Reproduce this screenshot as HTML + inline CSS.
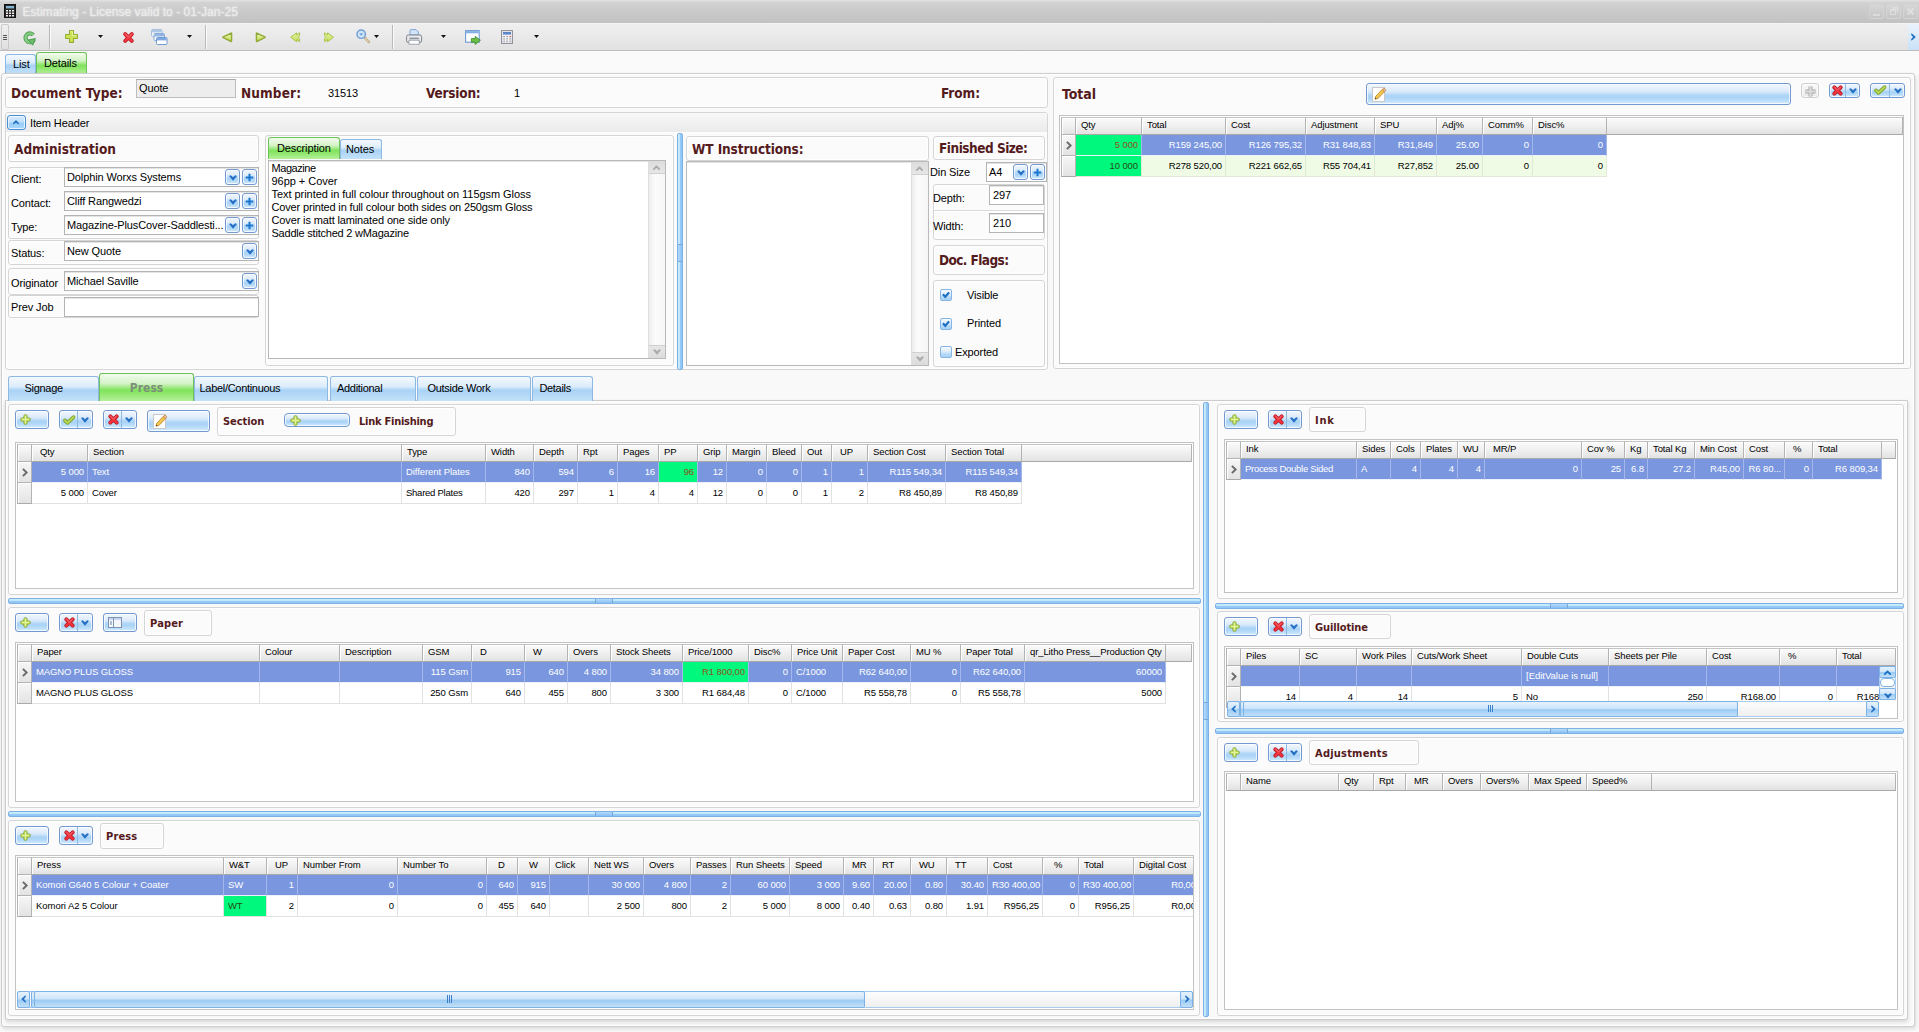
<!DOCTYPE html>
<html><head><meta charset="utf-8"><title>Estimating</title>
<style>
html,body{margin:0;padding:0}
body{width:1919px;height:1032px;overflow:hidden;position:relative;background:#fafafa;
 font:11px "Liberation Sans",sans-serif;color:#000;letter-spacing:-0.12px}
div,span{box-sizing:border-box}
.a{position:absolute;white-space:nowrap}
.pnl{position:absolute;border:1px solid #d5d5d5;border-radius:3px;background:#fbfbfb;box-shadow:inset 0 0 0 1px #fff}
.btn{position:absolute;border:1px solid #7499d0;border-radius:3px;
 background:linear-gradient(#f1f7fd 0%,#e2eefb 28%,#d0e5fa 44%,#b2d7f7 54%,#a9d3f6 66%,#bfe0fa 86%,#d6effd 100%);box-shadow:inset 0 0 0 1px rgba(255,255,255,.7)}
.btn .sep{position:absolute;top:0;bottom:0;width:1px;background:#8dbbe6}
.inp{position:absolute;border:1px solid #b4b4b4;background:#fff;box-shadow:inset 0 1px 0 #e4e4e4}
.t{position:absolute;white-space:nowrap;line-height:13px}
.grid{position:absolute;border:1px solid #c2c2c2;background:#fff;overflow:hidden}
.hc{font-size:9.5px;letter-spacing:-0.1px;position:absolute;border:1px solid #b3b3b3;border-top-color:#c4c4c4;border-bottom-color:#a9a9a9;background:linear-gradient(#fbfbfb 0%,#f0f0f0 50%,#e2e2e2 100%);
 box-shadow:inset 1px 1px 0 #fff;white-space:nowrap;overflow:hidden;line-height:12px;padding:1px 0 0 4px}
.c{font-size:9.5px;letter-spacing:-0.1px;position:absolute;white-space:nowrap;overflow:hidden;line-height:13px;border-right:1px solid #e2e2e2;border-bottom:1px solid #e2e2e2;padding:4px 3px 0 4px;background:#fff}
.c.r{text-align:right}
.c.s{background:#7996df;color:#fff;border-right-color:#a3b7ea;border-bottom-color:#eef2fb}
.c.g{background:#00f97d;color:#274a10}
.c.s.g{background:#00f97d;color:#93501e}
.c.lg{background:#effbe4;border-right-color:#dfe9d6;border-bottom-color:#dfe9d6}
.c.lg.g{background:#00f97d;color:#274a10}
.ind{position:absolute;border:1px solid #b3b3b3;border-bottom-color:#a9a9a9;background:linear-gradient(#f6f6f6,#e3e3e3);box-shadow:inset 1px 1px 0 #fff}
.tab{position:absolute;border:1px solid #8db8e4;border-bottom:none;border-radius:3px 3px 0 0;
 background:linear-gradient(#f4f9fe 0%,#dcecfb 40%,#a9d2f5 55%,#c4e2fa 100%);white-space:nowrap;line-height:13px}
.tab.on{border-color:#6fc25a;background:linear-gradient(#f2fbee 0%,#d5f3c8 35%,#7fe35a 60%,#b4f09a 100%)}
.spl{position:absolute;background:linear-gradient(#cbedfd 0%,#c0e6fc 42%,#95caf7 58%,#8fc6f6 100%);border:1px solid #7fb0e2;border-radius:2px}
.spl i{position:absolute;top:0;bottom:0;left:50%;margin-left:-10px;width:16px;border-left:1px solid #79a6da;border-right:1px solid #79a6da;background:linear-gradient(#b5dcfb,#86bff5)}
.splv{position:absolute;background:linear-gradient(90deg,#cbedfd 0%,#c0e6fc 42%,#95caf7 58%,#8fc6f6 100%);border:1px solid #7fb0e2;border-radius:2px}
.splv i{position:absolute;left:0;right:0;top:50%;margin-top:-8px;height:16px;border-top:1px solid #79a6da;border-bottom:1px solid #79a6da;background:linear-gradient(90deg,#b5dcfb,#86bff5)}
.sb{position:absolute;background:linear-gradient(#fdfdfd,#efefef);border:1px solid #a9cdf0;border-radius:2px}
.sbt{position:absolute;border:1px solid #7fb2e4;border-radius:2px;background:linear-gradient(#e6f2fd 0%,#cfe6fb 45%,#9ccbf3 55%,#c2e0f9 100%)}
svg{position:absolute;overflow:visible}
</style></head>
<body>
<svg style="left:0;top:0" width="0" height="0"><defs><linearGradient id="gy" x1="0" y1="0" x2="0" y2="1"><stop offset="0" stop-color="#f0f9c8"/><stop offset=".45" stop-color="#d8eb84"/><stop offset="1" stop-color="#b9d648"/></linearGradient><linearGradient id="gy2" x1="0" y1="0" x2="0" y2="1"><stop offset="0" stop-color="#e4f2a6"/><stop offset=".5" stop-color="#d4e87c"/><stop offset="1" stop-color="#c6e05e"/></linearGradient></defs></svg>
<div class="a" style="left:0px;top:0px;width:1919px;height:23px;background:linear-gradient(#e2e2e2 0%,#d2d2d2 12%,#cacaca 50%,#c2c2c2 100%)"></div>
<svg style="left:4px;top:4px" width="12" height="14" viewBox="0 0 12 14"><rect x="0.5" y="0.5" width="11" height="13" fill="#2a2a2a" stroke="#111"/><rect x="2" y="2" width="8" height="2.4" fill="#7fb6d8"/><rect x="2" y="6.0" width="2" height="1.5" fill="#f2f2f2"/><rect x="5" y="6.0" width="2" height="1.5" fill="#f2f2f2"/><rect x="8" y="6.0" width="2" height="1.5" fill="#f2f2f2"/><rect x="2" y="8.5" width="2" height="1.5" fill="#f2f2f2"/><rect x="5" y="8.5" width="2" height="1.5" fill="#f2f2f2"/><rect x="8" y="8.5" width="2" height="1.5" fill="#f2f2f2"/><rect x="2" y="11.0" width="2" height="1.5" fill="#f2f2f2"/><rect x="5" y="11.0" width="2" height="1.5" fill="#f2f2f2"/><rect x="8" y="11.0" width="2" height="1.5" fill="#f2f2f2"/></svg>
<div class="t" style="left:22.5px;top:5px;font-size:12px;line-height:15px;color:#ececec;text-shadow:0 0 2px #f4f4f4,0 0 1px #c8c8c8;letter-spacing:0.03px">Estimating - License valid to - 01-Jan-25</div>
<div class="a" style="left:1869px;top:4px;width:15px;height:15px;border:1px solid #d4d4d4;border-radius:2px;background:linear-gradient(#d6d6d6,#c6c6c6)"></div>
<div class="a" style="left:1886px;top:4px;width:15px;height:15px;border:1px solid #d4d4d4;border-radius:2px;background:linear-gradient(#d6d6d6,#c6c6c6)"></div>
<div class="a" style="left:1903px;top:4px;width:15px;height:15px;border:1px solid #d4d4d4;border-radius:2px;background:linear-gradient(#d6d6d6,#c6c6c6)"></div>
<div class="a" style="left:1873px;top:14px;width:7px;height:2px;background:#dcdcdc"></div>
<div class="a" style="left:1890px;top:9px;width:6px;height:6px;border:1px solid #dedede;border-top-width:2px"></div>
<div class="a" style="left:1892px;top:7px;width:6px;height:6px;border:1px solid #dedede;border-top-width:2px;border-left:none;border-bottom:none"></div>
<svg style="left:1906px;top:7px" width="9" height="9" viewBox="0 0 9 9"><path d="M1.5 1.5L7.5 7.5M7.5 1.5L1.5 7.5" stroke="#e0e0e0" stroke-width="1.8"/></svg>
<div class="a" style="left:0px;top:23px;width:1919px;height:28px;background:linear-gradient(#efefef 0%,#e9e9e9 50%,#e1e1e1 100%);border-bottom:1px solid #bdbdbd;border-top:1px solid #f4f4f4"></div>
<div class="a" style="left:1px;top:24px;width:8px;height:26px;border:1px solid #c9c9c9;border-radius:2px;background:linear-gradient(#efefef,#e0e0e0)"></div>
<div class="a" style="left:3px;top:35px;width:4px;height:1px;background:#555"></div>
<div class="a" style="left:3px;top:37px;width:4px;height:1px;background:#555"></div>
<div class="a" style="left:3px;top:39px;width:4px;height:1px;background:#555"></div>
<div class="a" style="left:49px;top:25px;width:2px;height:24px;border-left:1px solid #b9b9b9;border-right:1px solid #fbfbfb"></div>
<div class="a" style="left:205px;top:25px;width:2px;height:24px;border-left:1px solid #b9b9b9;border-right:1px solid #fbfbfb"></div>
<div class="a" style="left:392px;top:25px;width:2px;height:24px;border-left:1px solid #b9b9b9;border-right:1px solid #fbfbfb"></div>
<svg style="left:23px;top:31px" width="13" height="14" viewBox="0 0 13 14"><path d="M10.3 4.0 A4.4 4.4 0 1 0 10.9 8.6" fill="none" stroke="#4f9f52" stroke-width="4.2"/><path d="M10.3 4.0 A4.4 4.4 0 1 0 10.9 8.6" fill="none" stroke="#86cc84" stroke-width="2.4"/><path d="M5.2 9.0 L12.4 7.6 L9.8 14.2 Z" fill="#6cba6a" stroke="#4a994c" stroke-width=".9" stroke-linejoin="round"/></svg>
<svg style="left:65px;top:30px" width="13" height="13" viewBox="0 0 13 13"><path d="M4.5 0.6H8.5V4.5H12.4V8.5H8.5V12.4H4.5V8.5H0.6V4.5H4.5Z" fill="#cde256" stroke="#93b233" stroke-width="1.1" stroke-linejoin="round"/><path d="M5.5 1.6H7.5V5.5H11.4" fill="none" stroke="#e6f29a" stroke-width="1"/></svg>
<svg style="left:98px;top:35px" width="5" height="3" viewBox="0 0 5 3"><path d="M0 0H5L2.5 3Z" fill="#111"/></svg>
<svg style="left:123px;top:32px" width="11" height="11" viewBox="0 0 11 11"><path d="M2.2 2.2L8.8 8.8M8.8 2.2L2.2 8.8" fill="none" stroke="#c01c26" stroke-width="4" stroke-linecap="round"/><path d="M2.2 2.2L8.8 8.8M8.8 2.2L2.2 8.8" fill="none" stroke="#f03640" stroke-width="2.4" stroke-linecap="round"/><path d="M2.5 2.1L5.5 4.9L8.5 2.1" fill="none" stroke="#f98a90" stroke-width=".8" stroke-linecap="round"/></svg>
<svg style="left:151px;top:29px" width="17" height="16" viewBox="0 0 17 16"><g opacity="0.55"><rect x="0.5" y="0.5" width="10.5" height="7" rx="1" fill="#fff" stroke="#6f9bd6"/><rect x="1" y="1" width="9.5" height="2.4" fill="#7fa8e0"/></g><g opacity="0.8"><rect x="3.0" y="4.5" width="10.5" height="7" rx="1" fill="#fff" stroke="#6f9bd6"/><rect x="3.5" y="5" width="9.5" height="2.4" fill="#7fa8e0"/></g><g opacity="1"><rect x="5.5" y="8.5" width="10.5" height="7" rx="1" fill="#fff" stroke="#6f9bd6"/><rect x="6" y="9" width="9.5" height="2.4" fill="#7fa8e0"/></g></svg>
<svg style="left:187px;top:35px" width="5" height="3" viewBox="0 0 5 3"><path d="M0 0H5L2.5 3Z" fill="#111"/></svg>
<svg style="left:222px;top:32px" width="10" height="10.4" viewBox="0 0 10 10.4"><path d="M9.2 1.2 Q9.6 0.6 9.6 1.6 L9.6 8.8 Q9.6 9.8 8.8 9.4 L1.2 5.6 Q0.4 5.2 1.2 4.8 Z" fill="url(#gy)" stroke="#90aa38" stroke-width="1.4" stroke-linejoin="round"/></svg>
<svg style="left:256px;top:32px" width="10" height="10.4" viewBox="0 0 10 10.4"><path d="M0.8 1.2 Q0.4 0.6 0.4 1.6 L0.4 8.8 Q0.4 9.8 1.2 9.4 L8.8 5.6 Q9.6 5.2 8.8 4.8 Z" fill="url(#gy)" stroke="#90aa38" stroke-width="1.4" stroke-linejoin="round"/></svg>
<svg style="left:290px;top:32px" width="10" height="10.4" viewBox="0 0 10 10.4"><path d="M9.6 0.8 L6.6 3.0 L6.6 0.8 L0.7 5.2 L6.6 9.8 L6.6 7.4 L9.6 9.8 L9.6 6.6 L8.2 5.2 L9.6 3.8 Z" fill="url(#gy2)" stroke="#a9c44e" stroke-width="1" stroke-linejoin="round"/></svg>
<svg style="left:324px;top:32px" width="10" height="10.4" viewBox="0 0 10 10.4"><path d="M0.6 0.8 L3.6 3.0 L3.6 0.8 L9.5 5.2 L3.6 9.8 L3.6 7.4 L0.6 9.8 L0.6 6.6 L2.0 5.2 L0.6 3.8 Z" fill="url(#gy2)" stroke="#a9c44e" stroke-width="1" stroke-linejoin="round"/></svg>
<svg style="left:356px;top:29px" width="14" height="14" viewBox="0 0 14 14"><path d="M8.2 8.2 L12.8 12.8" stroke="#b9a27c" stroke-width="2.6" stroke-linecap="round"/><path d="M8.4 8.4 L12.6 12.6" stroke="#ecdcbc" stroke-width="1.1" stroke-linecap="round"/><circle cx="5.2" cy="5.2" r="4.2" fill="#cfe3f7" stroke="#6f9dd4" stroke-width="1.4"/><path d="M3.4 4.6 L5.2 6.4 L7 4.6 Z" fill="#4d8fd6"/></svg>
<svg style="left:374px;top:35px" width="5" height="3" viewBox="0 0 5 3"><path d="M0 0H5L2.5 3Z" fill="#111"/></svg>
<svg style="left:406px;top:29px" width="16" height="16" viewBox="0 0 16 16"><path d="M4 6V1.5Q4 .6 5 .6H10L12.4 3V6Z" fill="#d4e4f8" stroke="#7ea4d8" stroke-width="1"/><rect x="0.6" y="6" width="15" height="7.4" rx="1.6" fill="#e9e9ee" stroke="#7f848f" stroke-width="1"/><rect x="3.4" y="8.6" width="9.4" height="1.6" fill="#8f949e"/><rect x="3" y="11.2" width="10.2" height="4" fill="#fff" stroke="#8d93a0" stroke-width=".8"/></svg>
<svg style="left:441px;top:35px" width="5" height="3" viewBox="0 0 5 3"><path d="M0 0H5L2.5 3Z" fill="#111"/></svg>
<svg style="left:465px;top:30px" width="16" height="15" viewBox="0 0 16 15"><rect x="0.6" y="0.6" width="13.6" height="11.6" fill="#fff" stroke="#6f9bd6" stroke-width="1.1"/><rect x="1.1" y="1.1" width="12.6" height="2.2" fill="#86aee4"/><path d="M6.4 8.6H10.2V6.4L15.4 10.3L10.2 14.4V12.2H6.4Z" fill="#6cc04a" stroke="#3f8f2c" stroke-width=".9" stroke-linejoin="round"/></svg>
<svg style="left:501px;top:30px" width="12" height="14" viewBox="0 0 12 14"><rect x="0.6" y="0.6" width="10.8" height="12.8" fill="#f4f4f6" stroke="#8c8f99" stroke-width="1.1"/><rect x="2" y="2" width="8" height="2.6" fill="#5b86c8"/><rect x="2.2" y="6.0" width="1.8" height="1.1" fill="#9a9ca8"/><rect x="5.2" y="6.0" width="1.8" height="1.1" fill="#9a9ca8"/><rect x="8.2" y="6.0" width="1.8" height="1.1" fill="#d06a6a"/><rect x="2.2" y="8.3" width="1.8" height="1.1" fill="#9a9ca8"/><rect x="5.2" y="8.3" width="1.8" height="1.1" fill="#9a9ca8"/><rect x="8.2" y="8.3" width="1.8" height="1.1" fill="#9a9ca8"/><rect x="2.2" y="10.6" width="1.8" height="1.1" fill="#9a9ca8"/><rect x="5.2" y="10.6" width="1.8" height="1.1" fill="#9a9ca8"/><rect x="8.2" y="10.6" width="1.8" height="1.1" fill="#9a9ca8"/></svg>
<svg style="left:534px;top:35px" width="5" height="3" viewBox="0 0 5 3"><path d="M0 0H5L2.5 3Z" fill="#111"/></svg>
<div class="a" style="left:1908px;top:24px;width:11px;height:26px;background:linear-gradient(#eaf3fc,#c9e1f8)"></div>
<svg style="left:1911px;top:33px" width="5" height="8" viewBox="0 0 5 8"><path d="M0.6 0.2 L0.1 1.8 L2.1 4 L0.1 6.2 L0.6 7.8 L4.8 4 Z" fill="#1b6fc4"/></svg>
<div class="tab" style="left:5px;top:54px;width:31px;height:20px;"><span style="position:absolute;left:7px;top:3px">List</span></div>
<div class="tab on" style="left:36px;top:52px;width:51px;height:22px;"><span style="position:absolute;left:7px;top:4px">Details</span></div>
<div class="a" style="left:1px;top:73px;width:1914px;height:954px;border:1px solid #cdcdcd;border-radius:3px;background:#f9f9f9;box-shadow:inset 0 0 0 1px #fff,1px 2px 4px rgba(0,0,0,.13)"></div>
<div class="pnl" style="left:5px;top:77px;width:1043px;height:31px;"></div>
<div class="a" style="left:11px;top:85px;font:bold 13.5px/16.5px 'DejaVu Sans Condensed','Liberation Sans',sans-serif;color:#541a1c;letter-spacing:0.112px;">Document Type:</div>
<div class="a" style="left:136px;top:79px;width:100px;height:19px;border:1px solid #bdbdbd;border-top-color:#a8a8a8;background:#ededed"></div>
<div class="t" style="left:139px;top:82px;">Quote</div>
<div class="a" style="left:241px;top:85px;font:bold 13.5px/16.5px 'DejaVu Sans Condensed','Liberation Sans',sans-serif;color:#541a1c;letter-spacing:0.122px;">Number:</div>
<div class="t" style="left:328px;top:87px;">31513</div>
<div class="a" style="left:426px;top:85px;font:bold 13.5px/16.5px 'DejaVu Sans Condensed','Liberation Sans',sans-serif;color:#541a1c;letter-spacing:-0.206px;">Version:</div>
<div class="t" style="left:514px;top:87px;">1</div>
<div class="a" style="left:941px;top:85px;font:bold 13.5px/16.5px 'DejaVu Sans Condensed','Liberation Sans',sans-serif;color:#541a1c;letter-spacing:-0.074px;">From:</div>
<div class="pnl" style="left:5px;top:112px;width:1043px;height:258px;"></div>
<div class="a" style="left:6px;top:113px;width:1041px;height:20px;background:linear-gradient(#f8f8f8,#f1f1f1 50%,#eaeaea);border-bottom:1px solid #fdfdfd;border-radius:2px 2px 0 0"></div>
<div class="btn" style="left:7px;top:115px;width:19px;height:15px;border-color:#4a8fd6;background:linear-gradient(#d6eafb 0%,#c4e1fa 40%,#9acdf7 60%,#a8d8fb 100%)"><svg style="left:5px;top:3.7px" width="6" height="4" viewBox="0 0 6 4"><path d="M0.7 3.4 L3 1 L5.3 3.4" fill="none" stroke="#1f6fc0" stroke-width="1.5" stroke-linecap="round" stroke-linejoin="round"/></svg>
</div>
<div class="t" style="left:30px;top:117px;">Item Header</div>
<div class="pnl" style="left:8px;top:135px;width:251px;height:27px;"></div>
<div class="a" style="left:14px;top:141px;font:bold 13.5px/16.5px 'DejaVu Sans Condensed','Liberation Sans',sans-serif;color:#541a1c;letter-spacing:0.007px;">Administration</div>
<div class="pnl" style="left:8px;top:167px;width:251px;height:72px;"></div>
<div class="pnl" style="left:8px;top:240px;width:251px;height:25px;"></div>
<div class="pnl" style="left:8px;top:268px;width:251px;height:27px;"></div>
<div class="pnl" style="left:8px;top:295px;width:251px;height:23px;"></div>
<div class="t" style="left:11px;top:173px;">Client:</div>
<div class="inp" style="left:64px;top:167px;width:195px;height:20px;"></div>
<div class="t" style="left:67px;top:171px;">Dolphin Worxs Systems</div>
<div class="btn" style="left:242px;top:169px;width:15px;height:16px;"><svg style="left:2px;top:3px" width="9" height="9" viewBox="0 0 9 9"><path d="M4.5 0.8V8.2M0.8 4.5H8.2" fill="none" stroke="#1b76cf" stroke-width="2"/></svg>
</div>
<div class="btn" style="left:225px;top:169px;width:15px;height:16px;"><svg style="left:2.5px;top:4.5px" width="8" height="6" viewBox="0 0 7 5"><path d="M0 0.8 L1.6 0 L3.5 1.9 L5.4 0 L7 0.8 L3.5 5 Z" fill="#2570c4"/></svg>
</div>
<div class="t" style="left:11px;top:197px;">Contact:</div>
<div class="inp" style="left:64px;top:191px;width:195px;height:20px;"></div>
<div class="t" style="left:67px;top:195px;">Cliff Rangwedzi</div>
<div class="btn" style="left:242px;top:193px;width:15px;height:16px;"><svg style="left:2px;top:3px" width="9" height="9" viewBox="0 0 9 9"><path d="M4.5 0.8V8.2M0.8 4.5H8.2" fill="none" stroke="#1b76cf" stroke-width="2"/></svg>
</div>
<div class="btn" style="left:225px;top:193px;width:15px;height:16px;"><svg style="left:2.5px;top:4.5px" width="8" height="6" viewBox="0 0 7 5"><path d="M0 0.8 L1.6 0 L3.5 1.9 L5.4 0 L7 0.8 L3.5 5 Z" fill="#2570c4"/></svg>
</div>
<div class="t" style="left:11px;top:221px;">Type:</div>
<div class="inp" style="left:64px;top:215px;width:195px;height:20px;"></div>
<div class="t" style="left:67px;top:219px;">Magazine-PlusCover-Saddlesti...</div>
<div class="btn" style="left:242px;top:217px;width:15px;height:16px;"><svg style="left:2px;top:3px" width="9" height="9" viewBox="0 0 9 9"><path d="M4.5 0.8V8.2M0.8 4.5H8.2" fill="none" stroke="#1b76cf" stroke-width="2"/></svg>
</div>
<div class="btn" style="left:225px;top:217px;width:15px;height:16px;"><svg style="left:2.5px;top:4.5px" width="8" height="6" viewBox="0 0 7 5"><path d="M0 0.8 L1.6 0 L3.5 1.9 L5.4 0 L7 0.8 L3.5 5 Z" fill="#2570c4"/></svg>
</div>
<div class="t" style="left:11px;top:247px;">Status:</div>
<div class="inp" style="left:64px;top:241px;width:195px;height:20px;"></div>
<div class="t" style="left:67px;top:245px;">New Quote</div>
<div class="btn" style="left:242px;top:243px;width:15px;height:16px;"><svg style="left:2.5px;top:4.5px" width="8" height="6" viewBox="0 0 7 5"><path d="M0 0.8 L1.6 0 L3.5 1.9 L5.4 0 L7 0.8 L3.5 5 Z" fill="#2570c4"/></svg>
</div>
<div class="t" style="left:11px;top:277px;">Originator</div>
<div class="inp" style="left:64px;top:271px;width:195px;height:20px;"></div>
<div class="t" style="left:67px;top:275px;">Michael Saville</div>
<div class="btn" style="left:242px;top:273px;width:15px;height:16px;"><svg style="left:2.5px;top:4.5px" width="8" height="6" viewBox="0 0 7 5"><path d="M0 0.8 L1.6 0 L3.5 1.9 L5.4 0 L7 0.8 L3.5 5 Z" fill="#2570c4"/></svg>
</div>
<div class="t" style="left:11px;top:301px;">Prev Job</div>
<div class="inp" style="left:64px;top:297px;width:195px;height:20px;"></div>
<div class="pnl" style="left:265px;top:135px;width:409px;height:231px;"></div>
<div class="tab on" style="left:268px;top:137px;width:72px;height:22px;"><span style="position:absolute;left:8px;top:4px">Description</span></div>
<div class="tab" style="left:340px;top:139px;width:42px;height:20px;"><span style="position:absolute;left:5px;top:3px">Notes</span></div>
<div class="inp" style="left:268px;top:160px;width:398px;height:199px;border-color:#b9b9b9"></div>
<div class="t" style="left:271.5px;top:162px;letter-spacing:-0.443px">Magazine</div>
<div class="t" style="left:271.5px;top:175px;letter-spacing:-0.033px">96pp + Cover</div>
<div class="t" style="left:271.5px;top:188px;letter-spacing:-0.049px">Text printed in full colour throughout on 115gsm Gloss</div>
<div class="t" style="left:271.5px;top:201px;letter-spacing:-0.16px">Cover printed in full colour both sides on 250gsm Gloss</div>
<div class="t" style="left:271.5px;top:214px;letter-spacing:-0.134px">Cover is matt laminated one side only</div>
<div class="t" style="left:271.5px;top:227px;letter-spacing:-0.215px">Saddle stitched 2 wMagazine</div>
<div class="a" style="left:648px;top:161px;width:17px;height:197px;background:linear-gradient(90deg,#ededed,#fbfbfb 35%,#f6f6f6);border-left:1px solid #dedede"></div>
<div class="a" style="left:649px;top:161px;width:16px;height:13px;background:linear-gradient(#dcdcdc,#e6e6e6);border-bottom:1px solid #d0d0d0"></div>
<div class="a" style="left:649px;top:345px;width:16px;height:13px;background:linear-gradient(#e6e6e6,#dcdcdc);border-top:1px solid #d0d0d0"></div>
<svg style="left:653px;top:165px" width="7" height="5" viewBox="0 0 7 5"><path d="M0.8 4.1 L3.5 1.4 L6.2 4.1" fill="none" stroke="#aaaaaa" stroke-width="1.8" stroke-linecap="round" stroke-linejoin="round"/></svg>
<svg style="left:652.5px;top:348.5px" width="8" height="6" viewBox="0 0 7 5"><path d="M0 0.8 L1.6 0 L3.5 1.9 L5.4 0 L7 0.8 L3.5 5 Z" fill="#aaaaaa"/></svg>
<div class="splv" style="left:677px;top:133px;width:6px;height:237px;"><i></i></div>
<div class="pnl" style="left:686px;top:136px;width:243px;height:25px;"></div>
<div class="a" style="left:692px;top:141px;font:bold 13.5px/16.5px 'DejaVu Sans Condensed','Liberation Sans',sans-serif;color:#541a1c;letter-spacing:-0.094px;">WT Instructions:</div>
<div class="inp" style="left:686px;top:161px;width:243px;height:205px;border-color:#b9b9b9"></div>
<div class="a" style="left:911px;top:162px;width:17px;height:203px;background:linear-gradient(90deg,#ededed,#fbfbfb 35%,#f6f6f6);border-left:1px solid #dedede"></div>
<div class="a" style="left:912px;top:162px;width:16px;height:13px;background:linear-gradient(#dcdcdc,#e6e6e6);border-bottom:1px solid #d0d0d0"></div>
<div class="a" style="left:912px;top:352px;width:16px;height:13px;background:linear-gradient(#e6e6e6,#dcdcdc);border-top:1px solid #d0d0d0"></div>
<svg style="left:916px;top:166px" width="7" height="5" viewBox="0 0 7 5"><path d="M0.8 4.1 L3.5 1.4 L6.2 4.1" fill="none" stroke="#aaaaaa" stroke-width="1.8" stroke-linecap="round" stroke-linejoin="round"/></svg>
<svg style="left:915.5px;top:355.5px" width="8" height="6" viewBox="0 0 7 5"><path d="M0 0.8 L1.6 0 L3.5 1.9 L5.4 0 L7 0.8 L3.5 5 Z" fill="#aaaaaa"/></svg>
<div class="pnl" style="left:933px;top:136px;width:112px;height:24px;"></div>
<div class="a" style="left:939px;top:140px;font:bold 13.5px/16.5px 'DejaVu Sans Condensed','Liberation Sans',sans-serif;color:#541a1c;letter-spacing:-0.492px;">Finished Size:</div>
<div class="t" style="left:930px;top:166px;">Din Size</div>
<div class="inp" style="left:986px;top:162px;width:61px;height:20px;"></div>
<div class="t" style="left:989px;top:166px;">A4</div>
<div class="btn" style="left:1030px;top:164px;width:15px;height:16px;"><svg style="left:2px;top:3px" width="9" height="9" viewBox="0 0 9 9"><path d="M4.5 0.8V8.2M0.8 4.5H8.2" fill="none" stroke="#1b76cf" stroke-width="2"/></svg>
</div>
<div class="btn" style="left:1013px;top:164px;width:15px;height:16px;"><svg style="left:2.5px;top:4.5px" width="8" height="6" viewBox="0 0 7 5"><path d="M0 0.8 L1.6 0 L3.5 1.9 L5.4 0 L7 0.8 L3.5 5 Z" fill="#2570c4"/></svg>
</div>
<div class="pnl" style="left:933px;top:184px;width:112px;height:56px;"></div>
<div class="t" style="left:933px;top:192px;">Depth:</div>
<div class="inp" style="left:989px;top:185px;width:55px;height:20px;"></div>
<div class="t" style="left:993px;top:189px;">297</div>
<div class="t" style="left:933px;top:220px;">Width:</div>
<div class="inp" style="left:989px;top:213px;width:55px;height:20px;"></div>
<div class="t" style="left:993px;top:217px;">210</div>
<div class="a" style="left:934px;top:210px;width:110px;height:2px;border-top:1px solid #dadada;background:#fff"></div>
<div class="pnl" style="left:933px;top:245px;width:112px;height:30px;"></div>
<div class="a" style="left:939px;top:252px;font:bold 13.5px/16.5px 'DejaVu Sans Condensed','Liberation Sans',sans-serif;color:#541a1c;letter-spacing:-0.591px;">Doc. Flags:</div>
<div class="pnl" style="left:933px;top:280px;width:112px;height:87px;"></div>
<div class="a" style="left:940px;top:289px;width:12px;height:12px;border:1px solid #86b4e4;border-radius:2px;background:linear-gradient(#f6fafe 0%,#ddecfb 45%,#b5d9f7 70%,#a6d2f6 100%)"></div>
<svg style="left:942px;top:291px" width="8" height="8" viewBox="0 0 8 8"><path d="M0.9 3.2 L3.3 5.8 L7.1 1.4" fill="none" stroke="#1f6fc2" stroke-width="2.2" stroke-linecap="butt" stroke-linejoin="miter"/></svg>
<div class="t" style="left:967px;top:289px;">Visible</div>
<div class="a" style="left:940px;top:318px;width:12px;height:12px;border:1px solid #86b4e4;border-radius:2px;background:linear-gradient(#f6fafe 0%,#ddecfb 45%,#b5d9f7 70%,#a6d2f6 100%)"></div>
<svg style="left:942px;top:320px" width="8" height="8" viewBox="0 0 8 8"><path d="M0.9 3.2 L3.3 5.8 L7.1 1.4" fill="none" stroke="#1f6fc2" stroke-width="2.2" stroke-linecap="butt" stroke-linejoin="miter"/></svg>
<div class="t" style="left:967px;top:317px;">Printed</div>
<div class="a" style="left:940px;top:346px;width:12px;height:12px;border:1px solid #86b4e4;border-radius:2px;background:linear-gradient(#f6fafe 0%,#ddecfb 45%,#b5d9f7 70%,#a6d2f6 100%)"></div>
<div class="t" style="left:955px;top:346px;">Exported</div>
<div class="pnl" style="left:1053px;top:77px;width:858px;height:292px;"></div>
<div class="a" style="left:1062px;top:86px;font:bold 14px/17px 'DejaVu Sans Condensed','Liberation Sans',sans-serif;color:#541a1c;letter-spacing:-0.059px;">Total</div>
<div class="btn" style="left:1366px;top:83px;width:425px;height:22px;"><svg style="left:5px;top:3px" width="14" height="15" viewBox="0 0 14 15"><rect x="0.5" y="0.5" width="12" height="14" fill="#fff" stroke="#c9c9c9"/><path d="M3 12.2 L3.8 9.3 L10.2 2.4 L12.6 4.6 L6 11.4 Z" fill="#f3c64f" stroke="#b9822a" stroke-width=".8" stroke-linejoin="round"/><path d="M10.2 2.4 L11.2 1.4 Q12 0.8 12.8 1.6 L13.4 2.3 Q14 3.2 13.4 3.8 L12.6 4.6 Z" fill="#f0b9a8" stroke="#b9822a" stroke-width=".7"/><path d="M3 12.2 L3.4 10.7 L4.4 11.7 Z" fill="#3a2a1a"/></svg>
</div>
<div class="btn" style="left:1801px;top:83px;width:18px;height:15px;border-color:#d0d0d0;background:linear-gradient(#fafafa,#e8e8e8)"><svg style="left:3px;top:2px" width="11" height="11" viewBox="0 0 11 11"><path d="M5.5 0.4V10.6M0.4 5.5H10.6" fill="none" stroke="#a9a9a9" stroke-width="4"/><path d="M5.5 0.4V10.6M0.4 5.5H10.6" fill="none" stroke="#dcdcdc" stroke-width="2.2"/></svg>
</div>
<div class="btn" style="left:1829px;top:83px;width:31px;height:15px;"><svg style="left:2px;top:1px" width="11" height="11" viewBox="0 0 11 11"><path d="M2.3 2.3L8.7 8.7M8.7 2.3L2.3 8.7" fill="none" stroke="#bd1c26" stroke-width="4" stroke-linecap="round"/><path d="M2.3 2.3L8.7 8.7M8.7 2.3L2.3 8.7" fill="none" stroke="#f0353f" stroke-width="2.3" stroke-linecap="round"/><path d="M2.6 2.2L5.5 5.0L8.4 2.2" fill="none" stroke="#f98a90" stroke-width=".7" stroke-linecap="round"/></svg>
<div class="sep" style="left:15px"></div><svg style="left:18.5px;top:3.5px" width="8" height="6" viewBox="0 0 7 5"><path d="M0 0.8 L1.6 0 L3.5 1.9 L5.4 0 L7 0.8 L3.5 5 Z" fill="#2570c4"/></svg>
</div>
<div class="btn" style="left:1870px;top:83px;width:35px;height:15px;"><svg style="left:3px;top:1px" width="13" height="11" viewBox="0 0 13 11"><path d="M1.9 5.4L4.5 7.9L10.6 2.1" fill="none" stroke="#7f9f30" stroke-width="3.6" stroke-linecap="round" stroke-linejoin="round"/><path d="M1.9 5.4L4.5 7.9L10.6 2.1" fill="none" stroke="#b7dc52" stroke-width="1.9" stroke-linecap="round" stroke-linejoin="round"/></svg>
<div class="sep" style="left:18px"></div><svg style="left:22.5px;top:3.5px" width="8" height="6" viewBox="0 0 7 5"><path d="M0 0.8 L1.6 0 L3.5 1.9 L5.4 0 L7 0.8 L3.5 5 Z" fill="#2570c4"/></svg>
</div>
<div class="grid" style="left:1059px;top:115px;width:845px;height:249px"><div class="hc" style="left:1px;top:1px;width:842px;height:18px;padding:0"></div><div class="hc" style="left:1px;top:1px;width:15px;height:18px;padding:0"></div><div class="hc" style="left:15px;top:1px;width:67px;height:18px;padding-left:5px">Qty</div><div class="hc" style="left:81px;top:1px;width:85px;height:18px;padding-left:5px">Total</div><div class="hc" style="left:165px;top:1px;width:81px;height:18px;padding-left:5px">Cost</div><div class="hc" style="left:245px;top:1px;width:70px;height:18px;padding-left:5px">Adjustment</div><div class="hc" style="left:314px;top:1px;width:63px;height:18px;padding-left:5px">SPU</div><div class="hc" style="left:376px;top:1px;width:47px;height:18px;padding-left:5px">Adj%</div><div class="hc" style="left:422px;top:1px;width:51px;height:18px;padding-left:5px">Comm%</div><div class="hc" style="left:472px;top:1px;width:75px;height:18px;padding-left:5px">Disc%</div><div class="ind" style="left:1px;top:18px;width:15px;height:22px"><svg style="left:4px;top:6px" width="6" height="9" viewBox="0 0 6 9"><path d="M0.9 0.9 L4.6 4.5 L0.9 8.1" fill="none" stroke="#6b6b6b" stroke-width="2" stroke-linecap="butt" stroke-linejoin="miter"/></svg>
</div><div class="c r s g" style="left:16px;top:19px;width:66px;height:21px;padding-top:3px">5 000</div><div class="c r s" style="left:82px;top:19px;width:84px;height:21px;padding-top:3px">R159 245,00</div><div class="c r s" style="left:166px;top:19px;width:80px;height:21px;padding-top:3px">R126 795,32</div><div class="c r s" style="left:246px;top:19px;width:69px;height:21px;padding-top:3px">R31 848,83</div><div class="c r s" style="left:315px;top:19px;width:62px;height:21px;padding-top:3px">R31,849</div><div class="c r s" style="left:377px;top:19px;width:46px;height:21px;padding-top:3px">25.00</div><div class="c r s" style="left:423px;top:19px;width:50px;height:21px;padding-top:3px">0</div><div class="c r s" style="left:473px;top:19px;width:74px;height:21px;padding-top:3px">0</div><div class="ind" style="left:1px;top:39px;width:15px;height:22px"></div><div class="c r lg g" style="left:16px;top:40px;width:66px;height:21px;padding-top:3px">10 000</div><div class="c r lg" style="left:82px;top:40px;width:84px;height:21px;padding-top:3px">R278 520,00</div><div class="c r lg" style="left:166px;top:40px;width:80px;height:21px;padding-top:3px">R221 662,65</div><div class="c r lg" style="left:246px;top:40px;width:69px;height:21px;padding-top:3px">R55 704,41</div><div class="c r lg" style="left:315px;top:40px;width:62px;height:21px;padding-top:3px">R27,852</div><div class="c r lg" style="left:377px;top:40px;width:46px;height:21px;padding-top:3px">25.00</div><div class="c r lg" style="left:423px;top:40px;width:50px;height:21px;padding-top:3px">0</div><div class="c r lg" style="left:473px;top:40px;width:74px;height:21px;padding-top:3px">0</div></div>
<div class="a" style="left:5px;top:400px;width:1903px;height:620px;border:1px solid #cbcbcb;border-radius:0 0 3px 3px;background:#f9f9f9;box-shadow:inset 0 0 0 1px #fff,0 2px 4px rgba(0,0,0,.14)"></div>
<div class="pnl" style="left:8px;top:404px;width:1192px;height:191px;"></div>
<div class="btn" style="left:15px;top:410px;width:34px;height:19px;"><svg style="left:4px;top:3px" width="11" height="11" viewBox="0 0 11 11"><path d="M5.5 2.3V8.7M2.3 5.5H8.7" fill="none" stroke="#86a636" stroke-width="4.2" stroke-linecap="round"/><path d="M5.5 2.3V8.7M2.3 5.5H8.7" fill="none" stroke="#c9e464" stroke-width="2.4" stroke-linecap="round"/><path d="M5.5 2.4V8.6M2.4 5.5H8.6" fill="none" stroke="#e2f3a0" stroke-width="1" stroke-linecap="round"/></svg>
</div>
<div class="btn" style="left:59px;top:410px;width:34px;height:19px;"><svg style="left:3px;top:4px" width="13" height="11" viewBox="0 0 13 11"><path d="M1.9 5.4L4.5 7.9L10.6 2.1" fill="none" stroke="#7f9f30" stroke-width="3.6" stroke-linecap="round" stroke-linejoin="round"/><path d="M1.9 5.4L4.5 7.9L10.6 2.1" fill="none" stroke="#b7dc52" stroke-width="1.9" stroke-linecap="round" stroke-linejoin="round"/></svg>
<div class="sep" style="left:17px"></div><svg style="left:20.5px;top:5.5px" width="8" height="6" viewBox="0 0 7 5"><path d="M0 0.8 L1.6 0 L3.5 1.9 L5.4 0 L7 0.8 L3.5 5 Z" fill="#2570c4"/></svg>
</div>
<div class="btn" style="left:103px;top:410px;width:34px;height:19px;"><svg style="left:4px;top:3px" width="11" height="11" viewBox="0 0 11 11"><path d="M2.3 2.3L8.7 8.7M8.7 2.3L2.3 8.7" fill="none" stroke="#bd1c26" stroke-width="4" stroke-linecap="round"/><path d="M2.3 2.3L8.7 8.7M8.7 2.3L2.3 8.7" fill="none" stroke="#f0353f" stroke-width="2.3" stroke-linecap="round"/><path d="M2.6 2.2L5.5 5.0L8.4 2.2" fill="none" stroke="#f98a90" stroke-width=".7" stroke-linecap="round"/></svg>
<div class="sep" style="left:17px"></div><svg style="left:20.5px;top:5.5px" width="8" height="6" viewBox="0 0 7 5"><path d="M0 0.8 L1.6 0 L3.5 1.9 L5.4 0 L7 0.8 L3.5 5 Z" fill="#2570c4"/></svg>
</div>
<div class="btn" style="left:147px;top:410px;width:63px;height:22px;"><svg style="left:5px;top:3px" width="14" height="15" viewBox="0 0 14 15"><rect x="0.5" y="0.5" width="12" height="14" fill="#fff" stroke="#c9c9c9"/><path d="M3 12.2 L3.8 9.3 L10.2 2.4 L12.6 4.6 L6 11.4 Z" fill="#f3c64f" stroke="#b9822a" stroke-width=".8" stroke-linejoin="round"/><path d="M10.2 2.4 L11.2 1.4 Q12 0.8 12.8 1.6 L13.4 2.3 Q14 3.2 13.4 3.8 L12.6 4.6 Z" fill="#f0b9a8" stroke="#b9822a" stroke-width=".7"/><path d="M3 12.2 L3.4 10.7 L4.4 11.7 Z" fill="#3a2a1a"/></svg>
</div>
<div class="pnl" style="left:217px;top:407px;width:239px;height:29px;"></div>
<div class="a" style="left:223px;top:415px;font:bold 11px/14px 'DejaVu Sans Condensed','Liberation Sans',sans-serif;color:#541a1c;letter-spacing:-0.065px;">Section</div>
<div class="btn" style="left:284px;top:413px;width:66px;height:14px;border-radius:4px"><svg style="left:5px;top:1px" width="11" height="11" viewBox="0 0 11 11"><path d="M5.5 2.3V8.7M2.3 5.5H8.7" fill="none" stroke="#86a636" stroke-width="4.2" stroke-linecap="round"/><path d="M5.5 2.3V8.7M2.3 5.5H8.7" fill="none" stroke="#c9e464" stroke-width="2.4" stroke-linecap="round"/><path d="M5.5 2.4V8.6M2.4 5.5H8.6" fill="none" stroke="#e2f3a0" stroke-width="1" stroke-linecap="round"/></svg>
</div>
<div class="a" style="left:359px;top:415px;font:bold 11px/14px 'DejaVu Sans Condensed','Liberation Sans',sans-serif;color:#541a1c;letter-spacing:-0.255px;">Link Finishing</div>
<div class="grid" style="left:15px;top:442px;width:1179px;height:147px"><div class="hc" style="left:1px;top:1px;width:1175px;height:18px;padding:0"></div><div class="hc" style="left:1px;top:1px;width:15px;height:18px;padding:0"></div><div class="hc" style="left:15px;top:1px;width:57px;height:18px;padding-left:8px">Qty</div><div class="hc" style="left:71px;top:1px;width:315px;height:18px;padding-left:5px">Section</div><div class="hc" style="left:385px;top:1px;width:85px;height:18px;padding-left:5px">Type</div><div class="hc" style="left:469px;top:1px;width:49px;height:18px;padding-left:5px">Width</div><div class="hc" style="left:517px;top:1px;width:45px;height:18px;padding-left:5px">Depth</div><div class="hc" style="left:561px;top:1px;width:41px;height:18px;padding-left:5px">Rpt</div><div class="hc" style="left:601px;top:1px;width:42px;height:18px;padding-left:5px">Pages</div><div class="hc" style="left:642px;top:1px;width:40px;height:18px;padding-left:5px">PP</div><div class="hc" style="left:681px;top:1px;width:30px;height:18px;padding-left:5px">Grip</div><div class="hc" style="left:710px;top:1px;width:41px;height:18px;padding-left:5px">Margin</div><div class="hc" style="left:750px;top:1px;width:36px;height:18px;padding-left:5px">Bleed</div><div class="hc" style="left:785px;top:1px;width:31px;height:18px;padding-left:5px">Out</div><div class="hc" style="left:815px;top:1px;width:37px;height:18px;padding-left:8px">UP</div><div class="hc" style="left:851px;top:1px;width:79px;height:18px;padding-left:5px">Section Cost</div><div class="hc" style="left:929px;top:1px;width:77px;height:18px;padding-left:5px">Section Total</div><div class="ind" style="left:1px;top:18px;width:15px;height:22px"><svg style="left:4px;top:6px" width="6" height="9" viewBox="0 0 6 9"><path d="M0.9 0.9 L4.6 4.5 L0.9 8.1" fill="none" stroke="#6b6b6b" stroke-width="2" stroke-linecap="butt" stroke-linejoin="miter"/></svg>
</div><div class="c r s" style="left:16px;top:19px;width:56px;height:21px;padding-top:3px">5 000</div><div class="c s" style="left:72px;top:19px;width:314px;height:21px;padding-top:3px">Text</div><div class="c s" style="left:386px;top:19px;width:84px;height:21px;padding-top:3px;letter-spacing:-0.072px">Different Plates</div><div class="c r s" style="left:470px;top:19px;width:48px;height:21px;padding-top:3px">840</div><div class="c r s" style="left:518px;top:19px;width:44px;height:21px;padding-top:3px">594</div><div class="c r s" style="left:562px;top:19px;width:40px;height:21px;padding-top:3px">6</div><div class="c r s" style="left:602px;top:19px;width:41px;height:21px;padding-top:3px">16</div><div class="c r s g" style="left:643px;top:19px;width:39px;height:21px;padding-top:3px">96</div><div class="c r s" style="left:682px;top:19px;width:29px;height:21px;padding-top:3px">12</div><div class="c r s" style="left:711px;top:19px;width:40px;height:21px;padding-top:3px">0</div><div class="c r s" style="left:751px;top:19px;width:35px;height:21px;padding-top:3px">0</div><div class="c r s" style="left:786px;top:19px;width:30px;height:21px;padding-top:3px">1</div><div class="c r s" style="left:816px;top:19px;width:36px;height:21px;padding-top:3px">1</div><div class="c r s" style="left:852px;top:19px;width:78px;height:21px;padding-top:3px">R115 549,34</div><div class="c r s" style="left:930px;top:19px;width:76px;height:21px;padding-top:3px">R115 549,34</div><div class="ind" style="left:1px;top:39px;width:15px;height:22px"></div><div class="c r" style="left:16px;top:40px;width:56px;height:21px;padding-top:3px">5 000</div><div class="c" style="left:72px;top:40px;width:314px;height:21px;padding-top:3px">Cover</div><div class="c" style="left:386px;top:40px;width:84px;height:21px;padding-top:3px;letter-spacing:-0.249px">Shared Plates</div><div class="c r" style="left:470px;top:40px;width:48px;height:21px;padding-top:3px">420</div><div class="c r" style="left:518px;top:40px;width:44px;height:21px;padding-top:3px">297</div><div class="c r" style="left:562px;top:40px;width:40px;height:21px;padding-top:3px">1</div><div class="c r" style="left:602px;top:40px;width:41px;height:21px;padding-top:3px">4</div><div class="c r" style="left:643px;top:40px;width:39px;height:21px;padding-top:3px">4</div><div class="c r" style="left:682px;top:40px;width:29px;height:21px;padding-top:3px">12</div><div class="c r" style="left:711px;top:40px;width:40px;height:21px;padding-top:3px">0</div><div class="c r" style="left:751px;top:40px;width:35px;height:21px;padding-top:3px">0</div><div class="c r" style="left:786px;top:40px;width:30px;height:21px;padding-top:3px">1</div><div class="c r" style="left:816px;top:40px;width:36px;height:21px;padding-top:3px">2</div><div class="c r" style="left:852px;top:40px;width:78px;height:21px;padding-top:3px">R8 450,89</div><div class="c r" style="left:930px;top:40px;width:76px;height:21px;padding-top:3px">R8 450,89</div></div>
<div class="spl" style="left:8px;top:598px;width:1193px;height:6px;"><i></i></div>
<div class="pnl" style="left:8px;top:607px;width:1192px;height:201px;"></div>
<div class="btn" style="left:15px;top:613px;width:34px;height:19px;"><svg style="left:4px;top:3px" width="11" height="11" viewBox="0 0 11 11"><path d="M5.5 2.3V8.7M2.3 5.5H8.7" fill="none" stroke="#86a636" stroke-width="4.2" stroke-linecap="round"/><path d="M5.5 2.3V8.7M2.3 5.5H8.7" fill="none" stroke="#c9e464" stroke-width="2.4" stroke-linecap="round"/><path d="M5.5 2.4V8.6M2.4 5.5H8.6" fill="none" stroke="#e2f3a0" stroke-width="1" stroke-linecap="round"/></svg>
</div>
<div class="btn" style="left:59px;top:613px;width:34px;height:19px;"><svg style="left:4px;top:3px" width="11" height="11" viewBox="0 0 11 11"><path d="M2.3 2.3L8.7 8.7M8.7 2.3L2.3 8.7" fill="none" stroke="#bd1c26" stroke-width="4" stroke-linecap="round"/><path d="M2.3 2.3L8.7 8.7M8.7 2.3L2.3 8.7" fill="none" stroke="#f0353f" stroke-width="2.3" stroke-linecap="round"/><path d="M2.6 2.2L5.5 5.0L8.4 2.2" fill="none" stroke="#f98a90" stroke-width=".7" stroke-linecap="round"/></svg>
<div class="sep" style="left:17px"></div><svg style="left:20.5px;top:5.5px" width="8" height="6" viewBox="0 0 7 5"><path d="M0 0.8 L1.6 0 L3.5 1.9 L5.4 0 L7 0.8 L3.5 5 Z" fill="#2570c4"/></svg>
</div>
<div class="btn" style="left:103px;top:613px;width:34px;height:19px;"><svg style="left:4px;top:3px" width="14" height="11" viewBox="0 0 14 11"><rect x="0.5" y="0.5" width="13" height="10" fill="#f4f8fd" stroke="#7e93b3"/><rect x="1" y="1" width="12" height="2" fill="#c9d8ee"/><path d="M5.5 1V10.5" stroke="#7e93b3"/><path d="M2 5H4M2 7H4" stroke="#6b84aa"/></svg>
</div>
<div class="pnl" style="left:144px;top:610px;width:68px;height:26px;"></div>
<div class="a" style="left:150px;top:617px;font:bold 11px/14px 'DejaVu Sans Condensed','Liberation Sans',sans-serif;color:#541a1c;letter-spacing:0.172px;">Paper</div>
<div class="grid" style="left:15px;top:642px;width:1179px;height:160px"><div class="hc" style="left:1px;top:1px;width:1175px;height:18px;padding:0"></div><div class="hc" style="left:1px;top:1px;width:15px;height:18px;padding:0"></div><div class="hc" style="left:15px;top:1px;width:229px;height:18px;padding-left:5px">Paper</div><div class="hc" style="left:243px;top:1px;width:81px;height:18px;padding-left:5px">Colour</div><div class="hc" style="left:323px;top:1px;width:84px;height:18px;padding-left:5px">Description</div><div class="hc" style="left:406px;top:1px;width:50px;height:18px;padding-left:5px">GSM</div><div class="hc" style="left:455px;top:1px;width:54px;height:18px;padding-left:8px">D</div><div class="hc" style="left:508px;top:1px;width:44px;height:18px;padding-left:8px">W</div><div class="hc" style="left:551px;top:1px;width:44px;height:18px;padding-left:5px">Overs</div><div class="hc" style="left:594px;top:1px;width:73px;height:18px;padding-left:5px">Stock Sheets</div><div class="hc" style="left:666px;top:1px;width:67px;height:18px;padding-left:5px">Price/1000</div><div class="hc" style="left:732px;top:1px;width:44px;height:18px;padding-left:5px">Disc%</div><div class="hc" style="left:775px;top:1px;width:52px;height:18px;padding-left:5px">Price Unit</div><div class="hc" style="left:826px;top:1px;width:69px;height:18px;padding-left:5px">Paper Cost</div><div class="hc" style="left:894px;top:1px;width:51px;height:18px;padding-left:5px">MU %</div><div class="hc" style="left:944px;top:1px;width:65px;height:18px;padding-left:5px">Paper Total</div><div class="hc" style="left:1008px;top:1px;width:142px;height:18px;padding-left:5px">qr_Litho Press__Production Qty</div><div class="ind" style="left:1px;top:18px;width:15px;height:22px"><svg style="left:4px;top:6px" width="6" height="9" viewBox="0 0 6 9"><path d="M0.9 0.9 L4.6 4.5 L0.9 8.1" fill="none" stroke="#6b6b6b" stroke-width="2" stroke-linecap="butt" stroke-linejoin="miter"/></svg>
</div><div class="c s" style="left:16px;top:19px;width:228px;height:21px;padding-top:3px;letter-spacing:-0.116px">MAGNO PLUS GLOSS</div><div class="c s" style="left:244px;top:19px;width:80px;height:21px;padding-top:3px"></div><div class="c s" style="left:324px;top:19px;width:83px;height:21px;padding-top:3px"></div><div class="c r s" style="left:407px;top:19px;width:49px;height:21px;padding-top:3px">115 Gsm</div><div class="c r s" style="left:456px;top:19px;width:53px;height:21px;padding-top:3px">915</div><div class="c r s" style="left:509px;top:19px;width:43px;height:21px;padding-top:3px">640</div><div class="c r s" style="left:552px;top:19px;width:43px;height:21px;padding-top:3px">4 800</div><div class="c r s" style="left:595px;top:19px;width:72px;height:21px;padding-top:3px">34 800</div><div class="c r s g" style="left:667px;top:19px;width:66px;height:21px;padding-top:3px">R1 800,00</div><div class="c r s" style="left:733px;top:19px;width:43px;height:21px;padding-top:3px">0</div><div class="c s" style="left:776px;top:19px;width:51px;height:21px;padding-top:3px">C/1000</div><div class="c r s" style="left:827px;top:19px;width:68px;height:21px;padding-top:3px">R62 640,00</div><div class="c r s" style="left:895px;top:19px;width:50px;height:21px;padding-top:3px">0</div><div class="c r s" style="left:945px;top:19px;width:64px;height:21px;padding-top:3px">R62 640,00</div><div class="c r s" style="left:1009px;top:19px;width:141px;height:21px;padding-top:3px">60000</div><div class="ind" style="left:1px;top:39px;width:15px;height:22px"></div><div class="c" style="left:16px;top:40px;width:228px;height:21px;padding-top:3px;letter-spacing:-0.116px">MAGNO PLUS GLOSS</div><div class="c" style="left:244px;top:40px;width:80px;height:21px;padding-top:3px"></div><div class="c" style="left:324px;top:40px;width:83px;height:21px;padding-top:3px"></div><div class="c r" style="left:407px;top:40px;width:49px;height:21px;padding-top:3px">250 Gsm</div><div class="c r" style="left:456px;top:40px;width:53px;height:21px;padding-top:3px">640</div><div class="c r" style="left:509px;top:40px;width:43px;height:21px;padding-top:3px">455</div><div class="c r" style="left:552px;top:40px;width:43px;height:21px;padding-top:3px">800</div><div class="c r" style="left:595px;top:40px;width:72px;height:21px;padding-top:3px">3 300</div><div class="c r" style="left:667px;top:40px;width:66px;height:21px;padding-top:3px">R1 684,48</div><div class="c r" style="left:733px;top:40px;width:43px;height:21px;padding-top:3px">0</div><div class="c" style="left:776px;top:40px;width:51px;height:21px;padding-top:3px">C/1000</div><div class="c r" style="left:827px;top:40px;width:68px;height:21px;padding-top:3px">R5 558,78</div><div class="c r" style="left:895px;top:40px;width:50px;height:21px;padding-top:3px">0</div><div class="c r" style="left:945px;top:40px;width:64px;height:21px;padding-top:3px">R5 558,78</div><div class="c r" style="left:1009px;top:40px;width:141px;height:21px;padding-top:3px">5000</div></div>
<div class="spl" style="left:8px;top:811px;width:1193px;height:6px;"><i></i></div>
<div class="pnl" style="left:8px;top:820px;width:1192px;height:196px;"></div>
<div class="btn" style="left:15px;top:826px;width:34px;height:19px;"><svg style="left:4px;top:3px" width="11" height="11" viewBox="0 0 11 11"><path d="M5.5 2.3V8.7M2.3 5.5H8.7" fill="none" stroke="#86a636" stroke-width="4.2" stroke-linecap="round"/><path d="M5.5 2.3V8.7M2.3 5.5H8.7" fill="none" stroke="#c9e464" stroke-width="2.4" stroke-linecap="round"/><path d="M5.5 2.4V8.6M2.4 5.5H8.6" fill="none" stroke="#e2f3a0" stroke-width="1" stroke-linecap="round"/></svg>
</div>
<div class="btn" style="left:59px;top:826px;width:34px;height:19px;"><svg style="left:4px;top:3px" width="11" height="11" viewBox="0 0 11 11"><path d="M2.3 2.3L8.7 8.7M8.7 2.3L2.3 8.7" fill="none" stroke="#bd1c26" stroke-width="4" stroke-linecap="round"/><path d="M2.3 2.3L8.7 8.7M8.7 2.3L2.3 8.7" fill="none" stroke="#f0353f" stroke-width="2.3" stroke-linecap="round"/><path d="M2.6 2.2L5.5 5.0L8.4 2.2" fill="none" stroke="#f98a90" stroke-width=".7" stroke-linecap="round"/></svg>
<div class="sep" style="left:17px"></div><svg style="left:20.5px;top:5.5px" width="8" height="6" viewBox="0 0 7 5"><path d="M0 0.8 L1.6 0 L3.5 1.9 L5.4 0 L7 0.8 L3.5 5 Z" fill="#2570c4"/></svg>
</div>
<div class="pnl" style="left:100px;top:823px;width:64px;height:26px;"></div>
<div class="a" style="left:106px;top:830px;font:bold 11px/14px 'DejaVu Sans Condensed','Liberation Sans',sans-serif;color:#541a1c;letter-spacing:0.14px;">Press</div>
<div class="grid" style="left:15px;top:855px;width:1179px;height:155px"><div class="hc" style="left:1px;top:1px;width:1183px;height:18px;padding:0"></div><div class="hc" style="left:1px;top:1px;width:15px;height:18px;padding:0"></div><div class="hc" style="left:15px;top:1px;width:193px;height:18px;padding-left:5px">Press</div><div class="hc" style="left:207px;top:1px;width:44px;height:18px;padding-left:5px">W&amp;T</div><div class="hc" style="left:250px;top:1px;width:32px;height:18px;padding-left:8px">UP</div><div class="hc" style="left:281px;top:1px;width:101px;height:18px;padding-left:5px">Number From</div><div class="hc" style="left:381px;top:1px;width:90px;height:18px;padding-left:5px">Number To</div><div class="hc" style="left:470px;top:1px;width:32px;height:18px;padding-left:11px">D</div><div class="hc" style="left:501px;top:1px;width:33px;height:18px;padding-left:11px">W</div><div class="hc" style="left:533px;top:1px;width:40px;height:18px;padding-left:5px">Click</div><div class="hc" style="left:572px;top:1px;width:56px;height:18px;padding-left:5px">Nett WS</div><div class="hc" style="left:627px;top:1px;width:48px;height:18px;padding-left:5px">Overs</div><div class="hc" style="left:674px;top:1px;width:41px;height:18px;padding-left:5px">Passes</div><div class="hc" style="left:714px;top:1px;width:60px;height:18px;padding-left:5px">Run Sheets</div><div class="hc" style="left:773px;top:1px;width:55px;height:18px;padding-left:5px">Speed</div><div class="hc" style="left:827px;top:1px;width:31px;height:18px;padding-left:8px">MR</div><div class="hc" style="left:857px;top:1px;width:38px;height:18px;padding-left:8px">RT</div><div class="hc" style="left:894px;top:1px;width:37px;height:18px;padding-left:8px">WU</div><div class="hc" style="left:930px;top:1px;width:42px;height:18px;padding-left:8px">TT</div><div class="hc" style="left:971px;top:1px;width:56px;height:18px;padding-left:5px">Cost</div><div class="hc" style="left:1026px;top:1px;width:37px;height:18px;padding-left:11px">%</div><div class="hc" style="left:1062px;top:1px;width:56px;height:18px;padding-left:5px">Total</div><div class="hc" style="left:1117px;top:1px;width:67px;height:18px;padding-left:5px">Digital Cost</div><div class="ind" style="left:1px;top:18px;width:15px;height:22px"><svg style="left:4px;top:6px" width="6" height="9" viewBox="0 0 6 9"><path d="M0.9 0.9 L4.6 4.5 L0.9 8.1" fill="none" stroke="#6b6b6b" stroke-width="2" stroke-linecap="butt" stroke-linejoin="miter"/></svg>
</div><div class="c s" style="left:16px;top:19px;width:192px;height:21px;padding-top:3px;letter-spacing:-0.045px">Komori G640 5 Colour + Coater</div><div class="c s" style="left:208px;top:19px;width:43px;height:21px;padding-top:3px">SW</div><div class="c r s" style="left:251px;top:19px;width:31px;height:21px;padding-top:3px">1</div><div class="c r s" style="left:282px;top:19px;width:100px;height:21px;padding-top:3px">0</div><div class="c r s" style="left:382px;top:19px;width:89px;height:21px;padding-top:3px">0</div><div class="c r s" style="left:471px;top:19px;width:31px;height:21px;padding-top:3px">640</div><div class="c r s" style="left:502px;top:19px;width:32px;height:21px;padding-top:3px">915</div><div class="c r s" style="left:534px;top:19px;width:39px;height:21px;padding-top:3px"></div><div class="c r s" style="left:573px;top:19px;width:55px;height:21px;padding-top:3px">30 000</div><div class="c r s" style="left:628px;top:19px;width:47px;height:21px;padding-top:3px">4 800</div><div class="c r s" style="left:675px;top:19px;width:40px;height:21px;padding-top:3px">2</div><div class="c r s" style="left:715px;top:19px;width:59px;height:21px;padding-top:3px">60 000</div><div class="c r s" style="left:774px;top:19px;width:54px;height:21px;padding-top:3px">3 000</div><div class="c r s" style="left:828px;top:19px;width:30px;height:21px;padding-top:3px">9.60</div><div class="c r s" style="left:858px;top:19px;width:37px;height:21px;padding-top:3px">20.00</div><div class="c r s" style="left:895px;top:19px;width:36px;height:21px;padding-top:3px">0.80</div><div class="c r s" style="left:931px;top:19px;width:41px;height:21px;padding-top:3px">30.40</div><div class="c r s" style="left:972px;top:19px;width:55px;height:21px;padding-top:3px">R30 400,00</div><div class="c r s" style="left:1027px;top:19px;width:36px;height:21px;padding-top:3px">0</div><div class="c r s" style="left:1063px;top:19px;width:55px;height:21px;padding-top:3px">R30 400,00</div><div class="c r s" style="left:1118px;top:19px;width:66px;height:21px;padding-top:3px">R0,00</div><div class="ind" style="left:1px;top:39px;width:15px;height:22px"></div><div class="c" style="left:16px;top:40px;width:192px;height:21px;padding-top:3px;letter-spacing:-0.04px">Komori A2 5 Colour</div><div class="c g" style="left:208px;top:40px;width:43px;height:21px;padding-top:3px">WT</div><div class="c r" style="left:251px;top:40px;width:31px;height:21px;padding-top:3px">2</div><div class="c r" style="left:282px;top:40px;width:100px;height:21px;padding-top:3px">0</div><div class="c r" style="left:382px;top:40px;width:89px;height:21px;padding-top:3px">0</div><div class="c r" style="left:471px;top:40px;width:31px;height:21px;padding-top:3px">455</div><div class="c r" style="left:502px;top:40px;width:32px;height:21px;padding-top:3px">640</div><div class="c r" style="left:534px;top:40px;width:39px;height:21px;padding-top:3px"></div><div class="c r" style="left:573px;top:40px;width:55px;height:21px;padding-top:3px">2 500</div><div class="c r" style="left:628px;top:40px;width:47px;height:21px;padding-top:3px">800</div><div class="c r" style="left:675px;top:40px;width:40px;height:21px;padding-top:3px">2</div><div class="c r" style="left:715px;top:40px;width:59px;height:21px;padding-top:3px">5 000</div><div class="c r" style="left:774px;top:40px;width:54px;height:21px;padding-top:3px">8 000</div><div class="c r" style="left:828px;top:40px;width:30px;height:21px;padding-top:3px">0.40</div><div class="c r" style="left:858px;top:40px;width:37px;height:21px;padding-top:3px">0.63</div><div class="c r" style="left:895px;top:40px;width:36px;height:21px;padding-top:3px">0.80</div><div class="c r" style="left:931px;top:40px;width:41px;height:21px;padding-top:3px">1.91</div><div class="c r" style="left:972px;top:40px;width:55px;height:21px;padding-top:3px">R956,25</div><div class="c r" style="left:1027px;top:40px;width:36px;height:21px;padding-top:3px">0</div><div class="c r" style="left:1063px;top:40px;width:55px;height:21px;padding-top:3px">R956,25</div><div class="c r" style="left:1118px;top:40px;width:66px;height:21px;padding-top:3px">R0,00</div></div>
<div class="sb" style="left:17px;top:991px;width:1176px;height:17px"></div><div class="sbt" style="left:17px;top:991px;width:13px;height:17px"><svg style="left:3px;top:3px" width="5" height="8" viewBox="0 0 5 8"><path d="M4.4 0.2 L4.9 1.8 L2.9 4 L4.9 6.2 L4.4 7.8 L0.2 4 Z" fill="#2570c4"/></svg>
</div><div class="sbt" style="left:1180px;top:991px;width:13px;height:17px"><svg style="left:4px;top:3px" width="5" height="8" viewBox="0 0 5 8"><path d="M0.6 0.2 L0.1 1.8 L2.1 4 L0.1 6.2 L0.6 7.8 L4.8 4 Z" fill="#2570c4"/></svg>
</div><div class="sbt" style="left:31px;top:991px;width:3px;height:17px;border-right:none;border-radius:2px 0 0 2px"></div><div class="sbt" style="left:34px;top:991px;width:831px;height:17px"></div><div class="a" style="left:447px;top:995px;width:5px;height:8px;border-left:1px solid #3b7fc9;border-right:1px solid #3b7fc9"><div style="position:absolute;left:1px;top:0;bottom:0;width:1px;background:#3b7fc9"></div></div>
<div class="splv" style="left:1203px;top:402px;width:6px;height:615px;"><i></i></div>
<div class="tab" style="left:8px;top:376px;width:91px;height:25px;"><span style="position:absolute;left:15.5px;top:5px;letter-spacing:-0.3px">Signage</span></div>
<div class="tab on" style="left:99px;top:373px;width:95px;height:28px;"></div>
<div class="a" style="left:129.7px;top:381px;font:bold 12px/15px 'DejaVu Sans Condensed','Liberation Sans',sans-serif;color:#7d8f7a;letter-spacing:0.045px;">Press</div>
<div class="tab" style="left:194px;top:376px;width:134px;height:25px;"><span style="position:absolute;left:4.5px;top:5px;letter-spacing:-0.3px">Label/Continuous</span></div>
<div class="tab" style="left:330px;top:376px;width:86px;height:25px;"><span style="position:absolute;left:6px;top:5px;letter-spacing:-0.3px">Additional</span></div>
<div class="tab" style="left:417px;top:376px;width:114px;height:25px;"><span style="position:absolute;left:9.5px;top:5px;letter-spacing:-0.3px">Outside Work</span></div>
<div class="tab" style="left:532px;top:376px;width:61px;height:25px;"><span style="position:absolute;left:6.399999999999977px;top:5px;letter-spacing:-0.3px">Details</span></div>
<div class="pnl" style="left:1217px;top:404px;width:687px;height:195px;"></div>
<div class="btn" style="left:1224px;top:410px;width:34px;height:19px;"><svg style="left:4px;top:3px" width="11" height="11" viewBox="0 0 11 11"><path d="M5.5 2.3V8.7M2.3 5.5H8.7" fill="none" stroke="#86a636" stroke-width="4.2" stroke-linecap="round"/><path d="M5.5 2.3V8.7M2.3 5.5H8.7" fill="none" stroke="#c9e464" stroke-width="2.4" stroke-linecap="round"/><path d="M5.5 2.4V8.6M2.4 5.5H8.6" fill="none" stroke="#e2f3a0" stroke-width="1" stroke-linecap="round"/></svg>
</div>
<div class="btn" style="left:1268px;top:410px;width:34px;height:19px;"><svg style="left:4px;top:3px" width="11" height="11" viewBox="0 0 11 11"><path d="M2.3 2.3L8.7 8.7M8.7 2.3L2.3 8.7" fill="none" stroke="#bd1c26" stroke-width="4" stroke-linecap="round"/><path d="M2.3 2.3L8.7 8.7M8.7 2.3L2.3 8.7" fill="none" stroke="#f0353f" stroke-width="2.3" stroke-linecap="round"/><path d="M2.6 2.2L5.5 5.0L8.4 2.2" fill="none" stroke="#f98a90" stroke-width=".7" stroke-linecap="round"/></svg>
<div class="sep" style="left:17px"></div><svg style="left:20.5px;top:5.5px" width="8" height="6" viewBox="0 0 7 5"><path d="M0 0.8 L1.6 0 L3.5 1.9 L5.4 0 L7 0.8 L3.5 5 Z" fill="#2570c4"/></svg>
</div>
<div class="pnl" style="left:1309px;top:407px;width:57px;height:25px;"></div>
<div class="a" style="left:1315px;top:414px;font:bold 11px/14px 'DejaVu Sans Condensed','Liberation Sans',sans-serif;color:#541a1c;letter-spacing:0.744px;">Ink</div>
<div class="grid" style="left:1224px;top:439px;width:674px;height:154px"><div class="hc" style="left:1px;top:1px;width:670px;height:18px;padding:0"></div><div class="hc" style="left:1px;top:1px;width:15px;height:18px;padding:0"></div><div class="hc" style="left:15px;top:1px;width:117px;height:18px;padding-left:5px">Ink</div><div class="hc" style="left:131px;top:1px;width:35px;height:18px;padding-left:5px">Sides</div><div class="hc" style="left:165px;top:1px;width:31px;height:18px;padding-left:5px">Cols</div><div class="hc" style="left:195px;top:1px;width:38px;height:18px;padding-left:5px">Plates</div><div class="hc" style="left:232px;top:1px;width:28px;height:18px;padding-left:5px">WU</div><div class="hc" style="left:259px;top:1px;width:98px;height:18px;padding-left:8px">MR/P</div><div class="hc" style="left:356px;top:1px;width:44px;height:18px;padding-left:5px">Cov %</div><div class="hc" style="left:399px;top:1px;width:24px;height:18px;padding-left:5px">Kg</div><div class="hc" style="left:422px;top:1px;width:48px;height:18px;padding-left:5px">Total Kg</div><div class="hc" style="left:469px;top:1px;width:50px;height:18px;padding-left:5px">Min Cost</div><div class="hc" style="left:518px;top:1px;width:42px;height:18px;padding-left:5px">Cost</div><div class="hc" style="left:559px;top:1px;width:29px;height:18px;padding-left:8px">%</div><div class="hc" style="left:587px;top:1px;width:70px;height:18px;padding-left:5px">Total</div><div class="ind" style="left:1px;top:18px;width:15px;height:22px"><svg style="left:4px;top:6px" width="6" height="9" viewBox="0 0 6 9"><path d="M0.9 0.9 L4.6 4.5 L0.9 8.1" fill="none" stroke="#6b6b6b" stroke-width="2" stroke-linecap="butt" stroke-linejoin="miter"/></svg>
</div><div class="c s" style="left:16px;top:19px;width:116px;height:21px;padding-top:3px;letter-spacing:-0.3px">Process Double Sided</div><div class="c s" style="left:132px;top:19px;width:34px;height:21px;padding-top:3px">A</div><div class="c r s" style="left:166px;top:19px;width:30px;height:21px;padding-top:3px">4</div><div class="c r s" style="left:196px;top:19px;width:37px;height:21px;padding-top:3px">4</div><div class="c r s" style="left:233px;top:19px;width:27px;height:21px;padding-top:3px">4</div><div class="c r s" style="left:260px;top:19px;width:97px;height:21px;padding-top:3px">0</div><div class="c r s" style="left:357px;top:19px;width:43px;height:21px;padding-top:3px">25</div><div class="c r s" style="left:400px;top:19px;width:23px;height:21px;padding-top:3px">6.8</div><div class="c r s" style="left:423px;top:19px;width:47px;height:21px;padding-top:3px">27.2</div><div class="c r s" style="left:470px;top:19px;width:49px;height:21px;padding-top:3px">R45,00</div><div class="c r s" style="left:519px;top:19px;width:41px;height:21px;padding-top:3px">R6 80...</div><div class="c r s" style="left:560px;top:19px;width:28px;height:21px;padding-top:3px">0</div><div class="c r s" style="left:588px;top:19px;width:69px;height:21px;padding-top:3px">R6 809,34</div></div>
<div class="spl" style="left:1215px;top:603px;width:689px;height:6px;"><i></i></div>
<div class="pnl" style="left:1217px;top:611px;width:687px;height:111px;"></div>
<div class="btn" style="left:1224px;top:617px;width:34px;height:19px;"><svg style="left:4px;top:3px" width="11" height="11" viewBox="0 0 11 11"><path d="M5.5 2.3V8.7M2.3 5.5H8.7" fill="none" stroke="#86a636" stroke-width="4.2" stroke-linecap="round"/><path d="M5.5 2.3V8.7M2.3 5.5H8.7" fill="none" stroke="#c9e464" stroke-width="2.4" stroke-linecap="round"/><path d="M5.5 2.4V8.6M2.4 5.5H8.6" fill="none" stroke="#e2f3a0" stroke-width="1" stroke-linecap="round"/></svg>
</div>
<div class="btn" style="left:1268px;top:617px;width:34px;height:19px;"><svg style="left:4px;top:3px" width="11" height="11" viewBox="0 0 11 11"><path d="M2.3 2.3L8.7 8.7M8.7 2.3L2.3 8.7" fill="none" stroke="#bd1c26" stroke-width="4" stroke-linecap="round"/><path d="M2.3 2.3L8.7 8.7M8.7 2.3L2.3 8.7" fill="none" stroke="#f0353f" stroke-width="2.3" stroke-linecap="round"/><path d="M2.6 2.2L5.5 5.0L8.4 2.2" fill="none" stroke="#f98a90" stroke-width=".7" stroke-linecap="round"/></svg>
<div class="sep" style="left:17px"></div><svg style="left:20.5px;top:5.5px" width="8" height="6" viewBox="0 0 7 5"><path d="M0 0.8 L1.6 0 L3.5 1.9 L5.4 0 L7 0.8 L3.5 5 Z" fill="#2570c4"/></svg>
</div>
<div class="pnl" style="left:1309px;top:614px;width:82px;height:25px;"></div>
<div class="a" style="left:1315px;top:621px;font:bold 11px/14px 'DejaVu Sans Condensed','Liberation Sans',sans-serif;color:#541a1c;letter-spacing:-0.115px;">Guillotine</div>
<div class="grid" style="left:1224px;top:646px;width:674px;height:73px"><div class="hc" style="left:1px;top:1px;width:670px;height:18px;padding:0"></div><div class="hc" style="left:1px;top:1px;width:15px;height:18px;padding:0"></div><div class="hc" style="left:15px;top:1px;width:60px;height:18px;padding-left:5px">Piles</div><div class="hc" style="left:74px;top:1px;width:58px;height:18px;padding-left:5px">SC</div><div class="hc" style="left:131px;top:1px;width:56px;height:18px;padding-left:5px">Work Piles</div><div class="hc" style="left:186px;top:1px;width:111px;height:18px;padding-left:5px">Cuts/Work Sheet</div><div class="hc" style="left:296px;top:1px;width:88px;height:18px;padding-left:5px">Double Cuts</div><div class="hc" style="left:383px;top:1px;width:99px;height:18px;padding-left:5px">Sheets per Pile</div><div class="hc" style="left:481px;top:1px;width:74px;height:18px;padding-left:5px">Cost</div><div class="hc" style="left:554px;top:1px;width:58px;height:18px;padding-left:8px">%</div><div class="hc" style="left:611px;top:1px;width:60px;height:18px;padding-left:5px">Total</div><div class="ind" style="left:1px;top:18px;width:15px;height:22px"><svg style="left:4px;top:6px" width="6" height="9" viewBox="0 0 6 9"><path d="M0.9 0.9 L4.6 4.5 L0.9 8.1" fill="none" stroke="#6b6b6b" stroke-width="2" stroke-linecap="butt" stroke-linejoin="miter"/></svg>
</div><div class="c r s" style="left:16px;top:19px;width:59px;height:21px;padding-top:3px"></div><div class="c r s" style="left:75px;top:19px;width:57px;height:21px;padding-top:3px"></div><div class="c r s" style="left:132px;top:19px;width:55px;height:21px;padding-top:3px"></div><div class="c r s" style="left:187px;top:19px;width:110px;height:21px;padding-top:3px"></div><div class="c s" style="left:297px;top:19px;width:87px;height:21px;padding-top:3px;letter-spacing:-0.01px">[EditValue is null]</div><div class="c r s" style="left:384px;top:19px;width:98px;height:21px;padding-top:3px"></div><div class="c r s" style="left:482px;top:19px;width:73px;height:21px;padding-top:3px"></div><div class="c r s" style="left:555px;top:19px;width:57px;height:21px;padding-top:3px"></div><div class="c r s" style="left:612px;top:19px;width:59px;height:21px;padding-top:3px"></div><div class="ind" style="left:1px;top:39px;width:15px;height:22px"></div><div class="c r" style="left:16px;top:40px;width:59px;height:21px;padding-top:3px">14</div><div class="c r" style="left:75px;top:40px;width:57px;height:21px;padding-top:3px">4</div><div class="c r" style="left:132px;top:40px;width:55px;height:21px;padding-top:3px">14</div><div class="c r" style="left:187px;top:40px;width:110px;height:21px;padding-top:3px">5</div><div class="c" style="left:297px;top:40px;width:87px;height:21px;padding-top:3px">No</div><div class="c r" style="left:384px;top:40px;width:98px;height:21px;padding-top:3px">250</div><div class="c r" style="left:482px;top:40px;width:73px;height:21px;padding-top:3px">R168.00</div><div class="c r" style="left:555px;top:40px;width:57px;height:21px;padding-top:3px">0</div><div class="c r" style="left:612px;top:40px;width:59px;height:21px;padding-top:3px">R168.00</div></div>
<div class="a" style="left:1227px;top:701px;width:670px;height:17px;background:#fff"></div>
<div class="sb" style="left:1227px;top:701px;width:652px;height:16px"></div><div class="sbt" style="left:1227px;top:701px;width:13px;height:16px"><svg style="left:3px;top:3px" width="5" height="8" viewBox="0 0 5 8"><path d="M4.4 0.2 L4.9 1.8 L2.9 4 L4.9 6.2 L4.4 7.8 L0.2 4 Z" fill="#2570c4"/></svg>
</div><div class="sbt" style="left:1866px;top:701px;width:13px;height:16px"><svg style="left:4px;top:3px" width="5" height="8" viewBox="0 0 5 8"><path d="M0.6 0.2 L0.1 1.8 L2.1 4 L0.1 6.2 L0.6 7.8 L4.8 4 Z" fill="#2570c4"/></svg>
</div><div class="sbt" style="left:1240px;top:701px;width:3px;height:16px;border-right:none;border-radius:2px 0 0 2px"></div><div class="sbt" style="left:1243px;top:701px;width:495px;height:16px"></div><div class="a" style="left:1488px;top:705px;width:5px;height:7px;border-left:1px solid #3b7fc9;border-right:1px solid #3b7fc9"><div style="position:absolute;left:1px;top:0;bottom:0;width:1px;background:#3b7fc9"></div></div>
<div class="sb" style="left:1879px;top:666px;width:17px;height:34px;"></div>
<div class="sbt" style="left:1879px;top:666px;width:17px;height:12px;"><svg style="left:4px;top:3px" width="7" height="5" viewBox="0 0 7 5"><path d="M0.8 4.1 L3.5 1.4 L6.2 4.1" fill="none" stroke="#1b6fc4" stroke-width="1.8" stroke-linecap="round" stroke-linejoin="round"/></svg>
</div>
<div class="sbt" style="left:1879px;top:688px;width:17px;height:12px;"><svg style="left:3.5px;top:3.5px" width="8" height="6" viewBox="0 0 7 5"><path d="M0 0.8 L1.6 0 L3.5 1.9 L5.4 0 L7 0.8 L3.5 5 Z" fill="#2570c4"/></svg>
</div>
<div class="sbt" style="left:1880px;top:678px;width:15px;height:9px;border-radius:4px;background:#fff"></div>
<div class="spl" style="left:1215px;top:728px;width:689px;height:6px;"><i></i></div>
<div class="pnl" style="left:1217px;top:737px;width:687px;height:279px;"></div>
<div class="btn" style="left:1224px;top:743px;width:34px;height:19px;"><svg style="left:4px;top:3px" width="11" height="11" viewBox="0 0 11 11"><path d="M5.5 2.3V8.7M2.3 5.5H8.7" fill="none" stroke="#86a636" stroke-width="4.2" stroke-linecap="round"/><path d="M5.5 2.3V8.7M2.3 5.5H8.7" fill="none" stroke="#c9e464" stroke-width="2.4" stroke-linecap="round"/><path d="M5.5 2.4V8.6M2.4 5.5H8.6" fill="none" stroke="#e2f3a0" stroke-width="1" stroke-linecap="round"/></svg>
</div>
<div class="btn" style="left:1268px;top:743px;width:34px;height:19px;"><svg style="left:4px;top:3px" width="11" height="11" viewBox="0 0 11 11"><path d="M2.3 2.3L8.7 8.7M8.7 2.3L2.3 8.7" fill="none" stroke="#bd1c26" stroke-width="4" stroke-linecap="round"/><path d="M2.3 2.3L8.7 8.7M8.7 2.3L2.3 8.7" fill="none" stroke="#f0353f" stroke-width="2.3" stroke-linecap="round"/><path d="M2.6 2.2L5.5 5.0L8.4 2.2" fill="none" stroke="#f98a90" stroke-width=".7" stroke-linecap="round"/></svg>
<div class="sep" style="left:17px"></div><svg style="left:20.5px;top:5.5px" width="8" height="6" viewBox="0 0 7 5"><path d="M0 0.8 L1.6 0 L3.5 1.9 L5.4 0 L7 0.8 L3.5 5 Z" fill="#2570c4"/></svg>
</div>
<div class="pnl" style="left:1309px;top:740px;width:110px;height:25px;"></div>
<div class="a" style="left:1315px;top:747px;font:bold 11px/14px 'DejaVu Sans Condensed','Liberation Sans',sans-serif;color:#541a1c;letter-spacing:0.218px;">Adjustments</div>
<div class="grid" style="left:1224px;top:771px;width:674px;height:239px"><div class="hc" style="left:1px;top:1px;width:670px;height:18px;padding:0"></div><div class="hc" style="left:1px;top:1px;width:15px;height:18px;padding:0"></div><div class="hc" style="left:15px;top:1px;width:99px;height:18px;padding-left:5px">Name</div><div class="hc" style="left:113px;top:1px;width:36px;height:18px;padding-left:5px">Qty</div><div class="hc" style="left:148px;top:1px;width:33px;height:18px;padding-left:5px">Rpt</div><div class="hc" style="left:180px;top:1px;width:38px;height:18px;padding-left:8px">MR</div><div class="hc" style="left:217px;top:1px;width:39px;height:18px;padding-left:5px">Overs</div><div class="hc" style="left:255px;top:1px;width:49px;height:18px;padding-left:5px">Overs%</div><div class="hc" style="left:303px;top:1px;width:59px;height:18px;padding-left:5px">Max Speed</div><div class="hc" style="left:361px;top:1px;width:66px;height:18px;padding-left:5px">Speed%</div></div>
</body></html>
